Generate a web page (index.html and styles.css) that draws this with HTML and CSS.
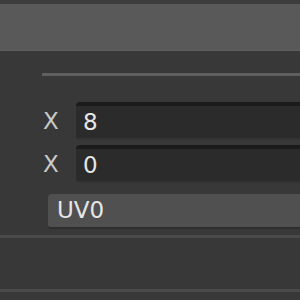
FILE: index.html
```html
<!DOCTYPE html>
<html>
<head>
<meta charset="utf-8">
<link rel="stylesheet" href="styles.css">
</head>
<body>
<div class="topbar"></div>
<div class="header"></div>
<div class="panel">
  <div class="sep"></div>
  <div class="fields">
    <div class="row">
      <span class="label">X</span>
      <div class="input">8</div>
    </div>
    <div class="row">
      <span class="label">X</span>
      <div class="input">0</div>
    </div>
    <div class="dropdown">UV0</div>
  </div>
</div>
<div class="divider"></div>
<div class="lower"></div>
<div class="divider"></div>
</body>
</html>
```
FILE: styles.css
```css
html, body {
  margin: 0;
  padding: 0;
  width: 300px;
  height: 300px;
  overflow: hidden;
  background: #383838;
  font-family: "DejaVu Sans", sans-serif;
}
.topbar {
  height: 4px;
  background: #3c3c3c;
}
.header {
  height: 46px;
  background: #595959;
  border-bottom: 1px solid #606060;
}
.panel {
  padding-top: 22px;
}
.sep {
  margin-left: 42px;
  height: 3px;
  background: #5f5f5f;
}
.fields {
  display: flex;
  flex-direction: column;
  padding-top: 26px;
}
.row {
  display: flex;
  align-items: center;
  height: 38px;
  margin-bottom: 5px;
}
.row + .row {
  margin-bottom: 11px;
}
.label {
  width: 76px;
  box-sizing: border-box;
  padding-left: 43px;
  font-size: 23px;
  color: #c9c9c9;
}
.input {
  flex: 1;
  height: 38px;
  box-sizing: border-box;
  background: #2b2b2b;
  border-top: 4px solid #1b1b1b;
  border-bottom: 2px solid #323232;
  border-radius: 4px 0 0 4px;
  padding-left: 7px;
  font-size: 23px;
  line-height: 32px;
  color: #e6e6e6;
}
.dropdown {
  margin-left: 48px;
  height: 35px;
  box-sizing: border-box;
  background: #505050;
  border-bottom: 2px solid #2e2e2e;
  border-radius: 4px 0 0 4px;
  padding-left: 9px;
  font-size: 23px;
  line-height: 33px;
  color: #e6e6e6;
}
.divider {
  height: 3px;
  background: #4a4a4a;
}
.panel + .divider {
  margin-top: 6px;
}
.lower {
  height: 51px;
}
```
